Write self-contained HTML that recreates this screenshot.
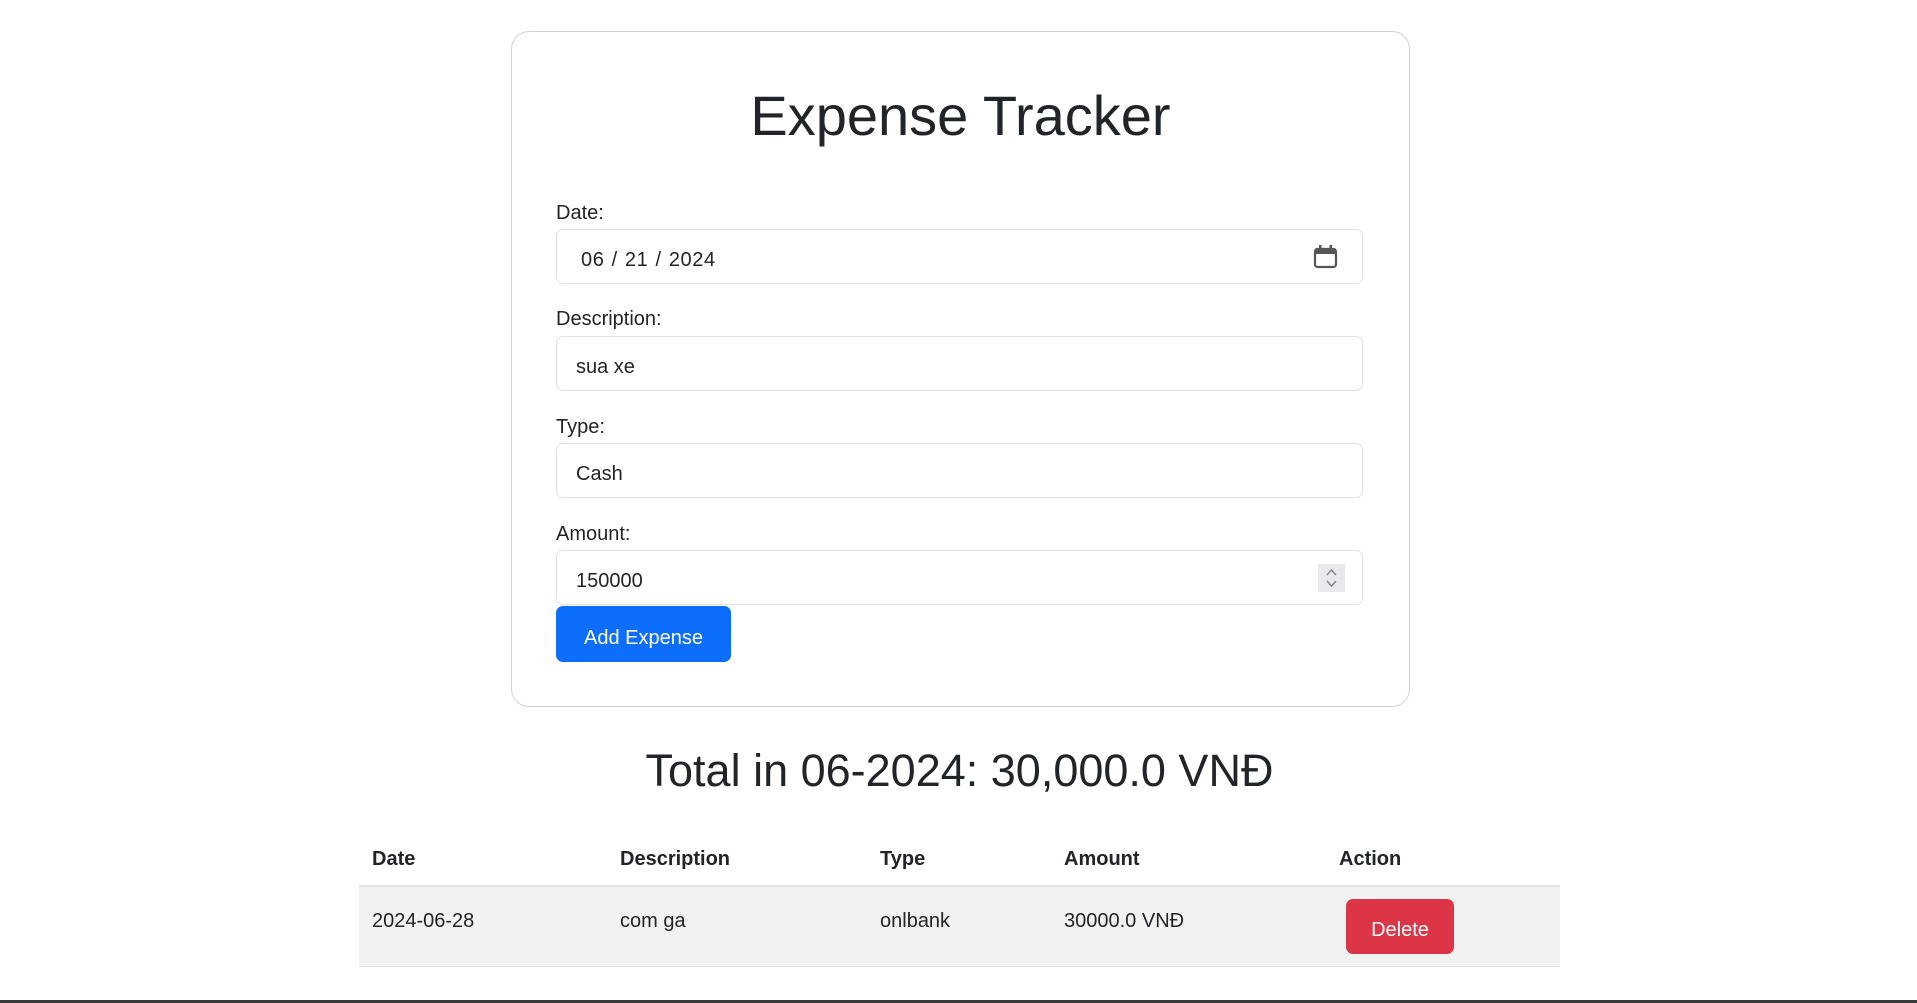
<!DOCTYPE html>
<html><head><meta charset="utf-8"><style>
*{box-sizing:border-box;margin:0;padding:0}
body{width:1917px;height:1003px;background:#fff;font-family:"Liberation Sans",sans-serif;color:#212529;position:relative;overflow:hidden;font-size:20px}
.a{position:absolute}
.card{left:511px;top:31px;width:899px;height:676px;border:1px solid #d3d3d3;border-radius:18px}
.lbl{left:556px;line-height:24px}
.inp{left:556px;width:807px;height:55px;border:1px solid #dee2e6;border-radius:7px;padding-left:19px;padding-top:4px;line-height:53px}
.th{font-weight:bold;top:847px;line-height:24px}
.td{top:909px;line-height:24px}
</style></head><body>
<div class="a card"></div>
<div class="a" style="left:511px;width:899px;top:82px;text-align:center;font-size:56px;line-height:68px">Expense Tracker</div>
<div class="a lbl" style="top:201px">Date:</div>
<div class="a inp" style="top:229px;padding-left:24px;letter-spacing:0.6px;word-spacing:1px">06 / 21 / 2024</div>
<svg class="a" style="left:1313px;top:244px" width="25" height="25" viewBox="0 0 25 25"><rect x="2" y="5" width="21" height="18" rx="2.5" fill="none" stroke="#555" stroke-width="2.2"/><rect x="2" y="5" width="21" height="5" fill="#555"/><rect x="6" y="1" width="2.5" height="5" fill="#555"/><rect x="16.5" y="1" width="2.5" height="5" fill="#555"/></svg>
<div class="a lbl" style="top:307px">Description:</div>
<div class="a inp" style="top:336px">sua xe</div>
<div class="a lbl" style="top:415px">Type:</div>
<div class="a inp" style="top:443px">Cash</div>
<div class="a lbl" style="top:522px">Amount:</div>
<div class="a inp" style="top:550px">150000</div>
<div class="a" style="left:1318px;top:564px;width:27px;height:28px;background:#e9e9ed"></div>
<svg class="a" style="left:1318px;top:564px" width="27" height="28" viewBox="0 0 27 28"><path d="M9 11 L13.5 6 L18 11 M9 17 L13.5 22 L18 17" fill="none" stroke="#8a8a90" stroke-width="1.6"/></svg>
<div class="a" style="left:556px;top:606px;width:175px;height:56px;background:#0d6efd;border-radius:7px;color:#fff;line-height:56px;padding-top:4px;text-align:center">Add Expense</div>
<div class="a" style="left:359px;width:1201px;top:741px;text-align:center;font-size:45px;line-height:60px">Total in 06-2024: 30,000.0 VNĐ</div>
<div class="a th" style="left:372px">Date</div>
<div class="a th" style="left:620px">Description</div>
<div class="a th" style="left:880px">Type</div>
<div class="a th" style="left:1064px">Amount</div>
<div class="a th" style="left:1339px">Action</div>
<div class="a" style="left:359px;top:885px;width:1201px;height:82px;background:#f2f2f2;border-top:2px solid #dee2e6;border-bottom:1px solid #dee2e6"></div>
<div class="a td" style="left:372px">2024-06-28</div>
<div class="a td" style="left:620px">com ga</div>
<div class="a td" style="left:880px">onlbank</div>
<div class="a td" style="left:1064px">30000.0 VNĐ</div>
<div class="a" style="left:1346px;top:899px;width:108px;height:55px;background:#dc3545;border-radius:7px;color:#fff;line-height:55px;padding-top:4px;text-align:center">Delete</div>
<div class="a" style="left:0;top:1000px;width:1917px;height:3px;background:#3a3a3a"></div>
</body></html>
